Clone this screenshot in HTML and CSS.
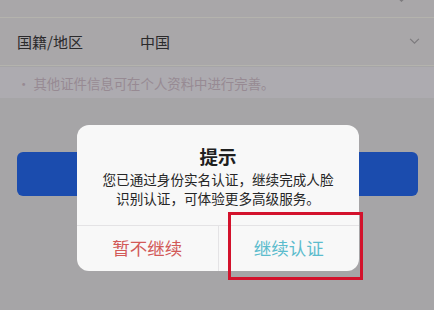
FILE: index.html
```html
<!DOCTYPE html>
<html lang="zh-CN">
<head>
    <meta charset="UTF-8">
    <meta name="viewport" content="width=device-width, initial-scale=1.0">
    <title>实名认证</title>
    <link rel="stylesheet" href="styles.css">
</head>
<body>
    <main class="page">
        <div class="form-row form-row--top">
            <svg class="chevron chevron--clipped" viewBox="0 0 12 8" aria-hidden="true">
                <path d="M1 1 L6 6 L11 1" />
            </svg>
        </div>
        <div class="form-row">
            <span class="form-row__label">国籍/地区</span>
            <span class="form-row__value">中国</span>
            <svg class="chevron" viewBox="0 0 12 8" aria-hidden="true">
                <path d="M1 1 L6 6 L11 1" />
            </svg>
        </div>
        <p class="hint">· 其他证件信息可在个人资料中进行完善。</p>
        <button class="submit-btn" type="button"></button>
    </main>

    <div class="dialog" role="dialog" aria-labelledby="dialogTitle">
        <div class="dialog__body">
            <h2 class="dialog__title" id="dialogTitle">提示</h2>
            <p class="dialog__text">您已通过身份实名认证，继续完成人脸<br>识别认证，可体验更多高级服务。</p>
        </div>
        <div class="dialog__actions">
            <button class="dialog__btn dialog__btn--cancel" type="button">暂不继续</button>
            <button class="dialog__btn dialog__btn--confirm" type="button">继续认证</button>
        </div>
    </div>

    <!-- annotation frame drawn over the confirm button -->
    <div class="highlight-box" aria-hidden="true"></div>
</body>
</html>
```

FILE: styles.css
```css
:root {
    --color-page: #a6a5a7;
    --color-row: #a9a7a9;
    --color-hint-bg: #adabb0;
    --color-line: #b4b3ad;
    --color-text: #2b2a2c;
    --color-hint: #978a93;
    --color-blue: #1b4cae;
    --color-dialog: #f8f8f8;
    --color-cancel: #d25a58;
    --color-confirm: #5cbccd;
    --color-mark: #d3122c;
    --font-cjk: "Noto Sans CJK SC", "Noto Sans", sans-serif;
}

*,
*::before,
*::after {
    box-sizing: border-box;
}

body {
    margin: 0;
    width: 434px;
    height: 310px;
    overflow: hidden;
    position: relative;
    font-family: var(--font-cjk);
    background: var(--color-page);
    color: var(--color-text);
}

.page {
    display: flex;
    flex-direction: column;
}

.form-row {
    display: flex;
    align-items: center;
    height: 48px;
    padding: 0 14px 0 17px;
    background: var(--color-row);
    border-bottom: 1px solid var(--color-line);
}

.form-row--top {
    height: 18px;
    justify-content: flex-end;
    align-items: flex-start;
}

.form-row__label {
    width: 123px;
    font-size: 15px;
}

.form-row__value {
    flex: 1;
    font-size: 15px;
}

.chevron {
    width: 11px;
    height: 7px;
    fill: none;
    stroke: #7d7b7e;
    stroke-width: 1.4;
}

.chevron--clipped {
    margin-top: -4px;
    margin-right: 13px;
}

.hint {
    margin: 1px 0 0;
    height: 31px;
    padding: 0 17px;
    display: flex;
    align-items: center;
    font-size: 13.4px;
    color: var(--color-hint);
    background: var(--color-hint-bg);
}

.submit-btn {
    margin: 54px 16px 0 17px;
    height: 44px;
    border: none;
    border-radius: 6px;
    background: var(--color-blue);
}

/* dialog */
.dialog {
    position: absolute;
    left: 77px;
    top: 125px;
    width: 282px;
    height: 146px;
    display: flex;
    flex-direction: column;
    background: var(--color-dialog);
    border-radius: 12px;
    overflow: hidden;
}

.dialog__body {
    height: 100px;
    padding-top: 19px;
    text-align: center;
}

.dialog__title {
    margin: 0;
    font-size: 18.5px;
    line-height: 24px;
    font-weight: 700;
    color: #1f1f1f;
}

.dialog__text {
    margin: 2px 0 0;
    font-size: 13.6px;
    line-height: 19px;
    color: #262626;
}

.dialog__actions {
    flex: 1;
    display: flex;
    border-top: 1px solid #e4e3e5;
}

.dialog__btn {
    flex: 1;
    border: none;
    background: transparent;
    font-family: var(--font-cjk);
    font-size: 17.5px;
    padding: 0 0 2px;
}

.dialog__btn--cancel {
    color: var(--color-cancel);
    border-right: 1px solid #e4e3e5;
}

.dialog__btn--confirm {
    color: var(--color-confirm);
}

.highlight-box {
    position: absolute;
    left: 228px;
    top: 212px;
    width: 135px;
    height: 68px;
    border: 3px solid var(--color-mark);
}
```
